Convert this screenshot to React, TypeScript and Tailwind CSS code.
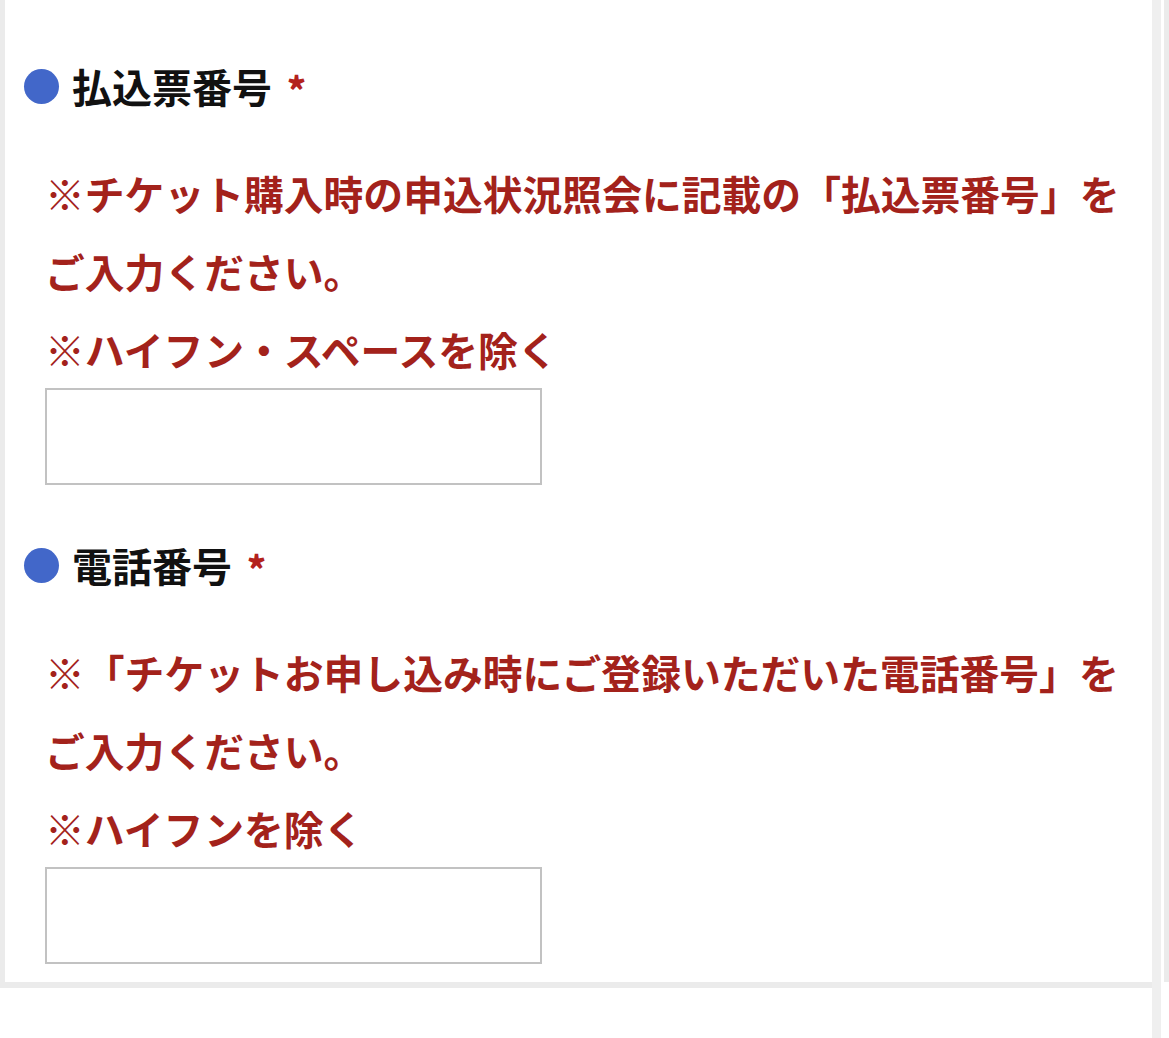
import React from 'react';

const font = { fontFamily: '"Noto Sans CJK JP", "Noto Sans", sans-serif' };

type Field = {
  label: string;
  notes: string[];
  last: string;
};

const fields: Field[] = [
  {
    label: '払込票番号',
    notes: ['※チケット購入時の申込状況照会に記載の「払込票番号」を', 'ご入力ください。'],
    last: '※ハイフン・スペースを除く',
  },
  {
    label: '電話番号',
    notes: ['※「チケットお申し込み時にご登録いただいた電話番号」を', 'ご入力ください。'],
    last: '※ハイフンを除く',
  },
];

const FieldBlock: React.FC<{ field: Field; first?: boolean }> = ({ field, first }) => (
  <div className={first ? '' : 'mt-[55px]'}>
    <div className="flex h-[50px] items-center">
      <span className="h-[35px] w-[35px] shrink-0 rounded-full bg-[#4267c9]" />
      <span className="ml-[13px] text-[40px] font-bold leading-[50px] text-[#111]">{field.label}</span>
      <span className="ml-[15px] mt-[4px] text-[36px] font-black leading-none text-[#b3221c]">*</span>
    </div>
    <div className="ml-[21px] mt-[43px] text-[39.8px] font-bold leading-[78px] text-[#a3221b]">
      {field.notes.map((n) => (
        <p key={n} className="whitespace-nowrap">{n}</p>
      ))}
      <p className="whitespace-nowrap">{field.last}</p>
    </div>
    <input
      type="text"
      aria-label={field.label}
      className="ml-[21px] block h-[97px] w-[497px] border-2 border-[#c2c2c2] bg-white outline-none"
    />
  </div>
);

export default function App() {
  return (
    <div className="flex h-[1038px] w-[1169px] overflow-hidden bg-white" style={font}>
      <div className="w-[1152px] shrink-0">
        <div className="h-[988px] border-b-[6px] border-l-[5px] border-[#ebebeb] bg-white pl-[19px] pt-[61px]">
          {fields.map((f, i) => (
            <FieldBlock key={f.label} field={f} first={i === 0} />
          ))}
        </div>
      </div>
      <div className="h-full w-[9px] shrink-0 bg-[#efefef]" />
      <div className="w-[3px] shrink-0" />
      <div className="h-[982px] w-[5px] shrink-0 bg-[#ebebeb]" />
    </div>
  );
}
